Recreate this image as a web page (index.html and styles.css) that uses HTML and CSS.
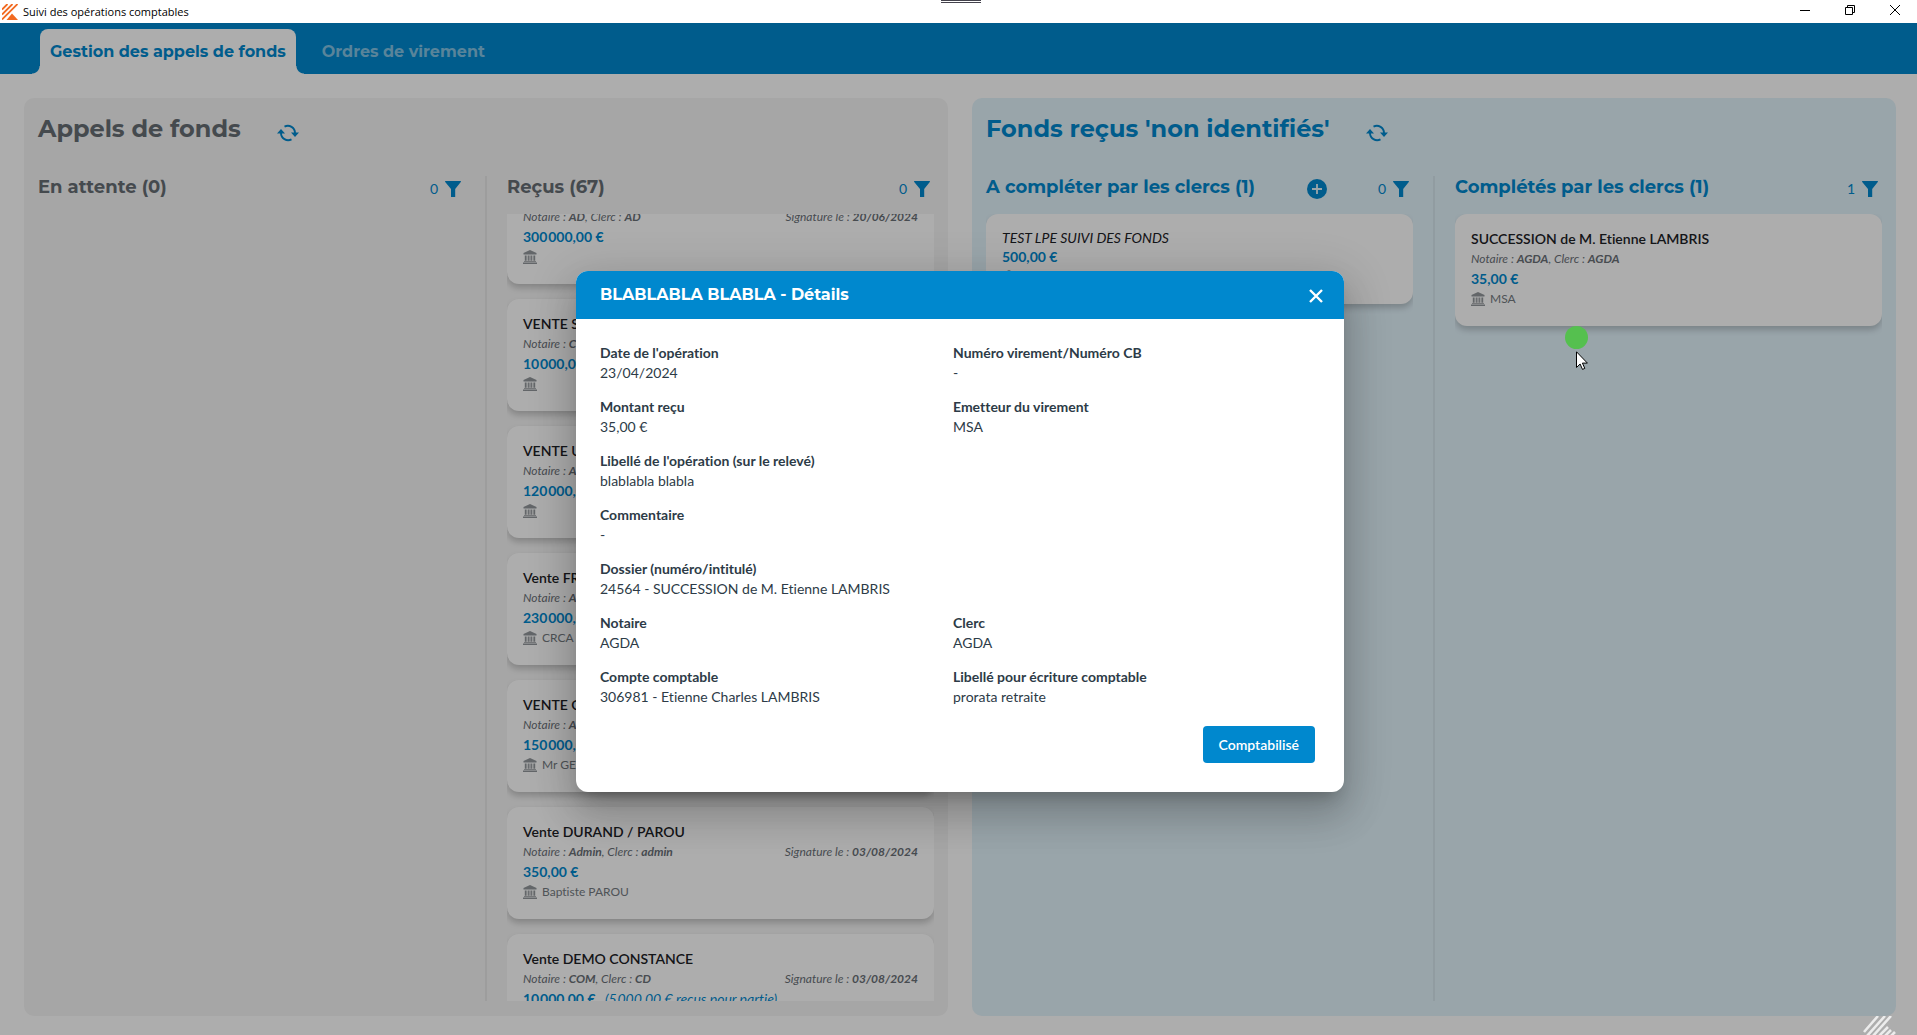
FILE: index.html
```
<!DOCTYPE html>
<html lang="fr">
<head>
<meta charset="utf-8">
<title>Suivi des opérations comptables</title>
<link rel="stylesheet" href="styles.css">
</head>
<body>
<svg class="sprite" aria-hidden="true">
  <symbol id="i-bank" viewBox="0 0 14 14"><path d="M7 0 0.5 3v1.6h13V3zM1.8 5.4h1.8v5.4H1.8zM4.7 5.4h1.2v5.4H4.7zM8.1 5.4h1.2v5.4H8.1zM10.4 5.4h1.8v5.4h-1.8zM6.5 5.4h1v5.4h-1zM1 11h12v.8H1zM0 12.6h14V14H0z"/></symbol>
  <symbol id="i-filter" viewBox="0 0 16 16"><path d="M.6 0h14.8c.6 0 .8.6.4 1L10.200 8v8H6V8L.2 1C-.2.6 0 0 .6 0z"/></symbol>
  <symbol id="i-refresh" viewBox="0 0 22 18"><path d="M7.500 2.600A7.200 7.200 0 0 1 18 9M14.500 15.400A7.200 7.200 0 0 1 4 9" fill="none" stroke="currentColor" stroke-width="1.900"/><path d="M14 8.600h8l-4 4.400zM0 9.400h8L4 5z"/></symbol>
  <symbol id="i-plus" viewBox="0 0 20 20"><circle cx="10" cy="10" r="10"/><path d="M10 5v10M5 10h10" stroke="#e3f3fa" stroke-width="1.800"/></symbol>
</svg>

<header class="titlebar">
  <svg class="app-icon" viewBox="0 0 16 16"><path d="M4.500 16 10 9.500l6 6.500z" fill="#f26a21"/><path d="M0 5.500 5.500 0M0 10.500 10.500 0M0 15.500 15.500 0" stroke="#f26a21" stroke-width="1.800"/></svg>
  <h1 class="app-title">Suivi des opérations comptables</h1>
  <div class="window-controls">
    <button class="win-btn" aria-label="Réduire"><svg viewBox="0 0 10 10"><path d="M0 5.500h10" /></svg></button>
    <button class="win-btn" aria-label="Restaurer"><svg viewBox="0 0 10 10"><path d="M.5 2.500h7v7h-7zM2.500 2.500v-2h7v7h-2"/></svg></button>
    <button class="win-btn" aria-label="Fermer la fenêtre"><svg viewBox="0 0 10 10"><path d="M0 0l10 10M10 0 0 10"/></svg></button>
  </div>
  <div class="drag-handle"></div>
</header>

<div class="app">
  <nav class="tabs">
    <a class="tab active" href="#appels">Gestion des appels de fonds</a>
    <a class="tab" href="#virements">Ordres de virement</a>
  </nav>

  <main class="board">
    <section class="panel">
      <div class="panel-head">
        <h2>Appels de fonds</h2>
        <button class="icon-btn refresh" aria-label="Actualiser"><svg><use href="#i-refresh"/></svg></button>
      </div>
      <div class="columns">
        <section class="column">
          <div class="column-head"><h3>En attente (0)</h3><button class="icon-btn filter" aria-label="Filtrer">0<svg><use href="#i-filter"/></svg></button></div>
          <div class="list"></div>
        </section>
        <section class="column">
          <div class="column-head"><h3>Reçus (67)</h3><button class="icon-btn filter" aria-label="Filtrer">0<svg><use href="#i-filter"/></svg></button></div>
          <div class="list" data-scroll="42">
            <article class="card">
              <h4>VENTE</h4>
              <p class="meta"><span>Notaire : <b>AD</b>, Clerc : <b>AD</b></span><span>Signature le : <b>20/06/2024</b></span></p>
              <p class="amount">300&#8202;000,00 €</p>
              <p class="bank"><svg><use href="#i-bank"/></svg></p>
            </article>
            <article class="card">
              <h4>VENTE S</h4>
              <p class="meta"><span>Notaire : <b>CD</b></span></p>
              <p class="amount">10&#8202;000,00 €</p>
              <p class="bank"><svg><use href="#i-bank"/></svg></p>
            </article>
            <article class="card">
              <h4>VENTE U</h4>
              <p class="meta"><span>Notaire : <b>AD</b></span></p>
              <p class="amount">120&#8202;000,00 €</p>
              <p class="bank"><svg><use href="#i-bank"/></svg></p>
            </article>
            <article class="card">
              <h4>Vente FR</h4>
              <p class="meta"><span>Notaire : <b>AG</b></span></p>
              <p class="amount">230&#8202;000,00 €</p>
              <p class="bank"><svg><use href="#i-bank"/></svg>CRCA</p>
            </article>
            <article class="card">
              <h4>VENTE C</h4>
              <p class="meta"><span>Notaire : <b>AG</b></span></p>
              <p class="amount">150&#8202;000,00 €</p>
              <p class="bank"><svg><use href="#i-bank"/></svg>Mr GE</p>
            </article>
            <article class="card">
              <h4>Vente DURAND / PAROU</h4>
              <p class="meta"><span>Notaire : <b>Admin</b>, Clerc : <b>admin</b></span><span>Signature le : <b>03/08/2024</b></span></p>
              <p class="amount">350,00 €</p>
              <p class="bank"><svg><use href="#i-bank"/></svg>Baptiste PAROU</p>
            </article>
            <article class="card">
              <h4>Vente DEMO CONSTANCE</h4>
              <p class="meta"><span>Notaire : <b>COM</b>, Clerc : <b>CD</b></span><span>Signature le : <b>03/08/2024</b></span></p>
              <p class="amount">10&#8202;000,00 € <i>(5&#8202;000,00 € reçus pour partie)</i></p>
              <p class="bank"><svg><use href="#i-bank"/></svg></p>
            </article>
          </div>
        </section>
      </div>
    </section>

    <section class="panel panel-blue">
      <div class="panel-head">
        <h2>Fonds reçus 'non identifiés'</h2>
        <button class="icon-btn refresh" aria-label="Actualiser"><svg><use href="#i-refresh"/></svg></button>
      </div>
      <div class="columns">
        <section class="column">
          <div class="column-head"><h3>A compléter par les clercs (1)</h3><button class="icon-btn add" aria-label="Ajouter"><svg><use href="#i-plus"/></svg></button><button class="icon-btn filter" aria-label="Filtrer">0<svg><use href="#i-filter"/></svg></button></div>
          <div class="list">
            <article class="card">
              <h4 class="untitled">TEST LPE SUIVI DES FONDS</h4>
              <p class="amount">500,00 €</p>
              <p class="bank"><svg><use href="#i-bank"/></svg></p>
            </article>
          </div>
        </section>
        <section class="column">
          <div class="column-head"><h3>Complétés par les clercs (1)</h3><button class="icon-btn filter" aria-label="Filtrer">1<svg><use href="#i-filter"/></svg></button></div>
          <div class="list">
            <article class="card">
              <h4>SUCCESSION de M. Etienne LAMBRIS</h4>
              <p class="meta"><span>Notaire : <b>AGDA</b>, Clerc : <b>AGDA</b></span></p>
              <p class="amount">35,00 €</p>
              <p class="bank"><svg><use href="#i-bank"/></svg>MSA</p>
            </article>
          </div>
        </section>
      </div>
    </section>
  </main>

  <div class="backdrop">
    <div class="modal" role="dialog" aria-modal="true" aria-labelledby="modal-title">
      <div class="modal-head">
        <h2 id="modal-title">BLABLABLA BLABLA - Détails</h2>
        <button class="close" aria-label="Fermer"><svg viewBox="0 0 14 14"><path d="M1 1l12 12M13 1 1 13"/></svg></button>
      </div>
      <div class="modal-body">
        <dl class="fields">
          <div><dt>Date de l'opération</dt><dd>23/04/2024</dd></div>
          <div><dt>Numéro virement/Numéro CB</dt><dd>-</dd></div>
          <div><dt>Montant reçu</dt><dd>35,00 €</dd></div>
          <div><dt>Emetteur du virement</dt><dd>MSA</dd></div>
          <div class="wide"><dt>Libellé de l'opération (sur le relevé)</dt><dd>blablabla blabla</dd></div>
          <div class="wide"><dt>Commentaire</dt><dd>-</dd></div>
          <div class="wide"><dt>Dossier (numéro/intitulé)</dt><dd>24564 - SUCCESSION de M. Etienne LAMBRIS</dd></div>
          <div><dt>Notaire</dt><dd>AGDA</dd></div>
          <div><dt>Clerc</dt><dd>AGDA</dd></div>
          <div><dt>Compte comptable</dt><dd>306981 - Etienne Charles LAMBRIS</dd></div>
          <div><dt>Libellé pour écriture comptable</dt><dd>prorata retraite</dd></div>
        </dl>
        <button class="primary">Comptabilisé</button>
      </div>
    </div>
  </div>

  <svg class="corner-logo" viewBox="0 0 33 19"><path d="M1 16 15 0M4 20 22 0M10 20 28 0M16 20l9-9M22 20l6-6M28 20l4-4" fill="none" stroke="#ececec" stroke-width="2.600"/></svg>
</div>

<div class="pointer">
  <span class="click-dot"></span>
  <svg class="cursor" viewBox="0 0 12 19"><path d="M.5.8v15.700l3.600-3.500 2.400 5.400 2.300-1-2.400-5.300h5z" fill="#fff" stroke="#000"/></svg>
</div>
<script src="app.js"></script>
</body>
</html>
```
FILE: styles.css
```
* { box-sizing: border-box; }

body {
  margin: 0;
  height: 100vh;
  display: flex;
  flex-direction: column;
  overflow: hidden;
  font-family: Lato, "Liberation Sans", sans-serif;
  font-size: 14px;
  line-height: 20px;
  font-variant-ligatures: none;
  color: #22282e;
  background: #fff;
}

h1, h2, h3, h4, p, dl, dd { margin: 0; }
button { border: 0; padding: 0; background: none; color: inherit; font: inherit; cursor: pointer; }
svg { display: block; fill: currentColor; }
.sprite { position: absolute; width: 0; height: 0; }

/* Window title bar */
.titlebar {
  position: relative;
  flex: none;
  display: flex;
  align-items: center;
  height: 23px;
  padding: 0 17px 0 2px;
  background: #fff;
  color: #000;
}
.app-icon { width: 16px; height: 16px; margin-right: 5px; fill: none; }
.app-title { font: 400 11px/16px "Open Sans", "Noto Sans", sans-serif; }
.window-controls { display: flex; gap: 35px; margin-left: auto; padding-bottom: 3px; }
.win-btn svg { width: 10px; height: 10px; fill: none; stroke: #000; overflow: visible; }
.drag-handle {
  position: absolute;
  top: 0;
  left: 50%;
  width: 40px;
  height: 3px;
  margin-left: -18px;
  border: solid #44424c;
  border-width: 1px 0;
}

/* Tabs */
.app { position: relative; flex: 1; min-height: 0; display: flex; flex-direction: column; }
.tabs { flex: none; display: flex; align-items: flex-end; height: 51px; padding-left: 40px; background: #0088ce; }
.tab {
  position: relative;
  height: 45px;
  padding: 0 10px;
  margin-right: 16px;
  font: 700 16px/45px Montserrat, "Open Sans", sans-serif;
  color: #83c3e4;
  text-decoration: none;
}
.tab.active { color: #0088ce; background: #fff; border-radius: 8px 8px 0 0; }
.tab.active::before, .tab.active::after {
  content: "";
  position: absolute;
  bottom: 0;
  width: 8px;
  height: 8px;
}
.tab.active::before { right: 100%; background: radial-gradient(circle at 0 0, transparent 7px, #fff 8px); }
.tab.active::after { left: 100%; background: radial-gradient(circle at 100% 0, transparent 7px, #fff 8px); }

/* Board */
.board {
  flex: 1;
  min-height: 0;
  display: grid;
  grid-template-columns: 1fr 1fr;
  gap: 24px;
  padding: 24px 21px 19px 24px;
}
.panel { min-height: 0; display: flex; flex-direction: column; padding: 14px 14px 15px; border-radius: 10px; background: #f5f5f5; color: #666d74; }
.panel-blue { background: #e2f3fb; color: #0088ce; }
.panel-head { display: flex; align-items: center; gap: 36px; height: 32px; }
h2 { padding-top: 2px; font: 700 24px/32px Montserrat, "Open Sans", sans-serif; }
h3 { font: 700 18px/24px Montserrat, "Open Sans", sans-serif; margin-right: auto; }
.icon-btn { display: flex; align-items: center; color: #0088ce; }
.refresh { padding-top: 10px; }
.refresh svg { width: 22px; height: 18px; }
.columns { flex: 1; min-height: 0; display: grid; grid-template-columns: 1fr 1fr; gap: 42px; margin-top: 32px; }
.column { position: relative; min-height: 0; display: flex; flex-direction: column; }
.column + .column::before { content: ""; position: absolute; left: -22px; top: 0; bottom: 0; width: 2px; background: rgba(0, 0, 0, .05); }
.column-head { display: flex; align-items: center; height: 38px; padding: 0 4px 12px 0; }
.column-head h3 { padding-bottom: 4px; }
.filter { gap: 7px; }
.filter svg { width: 16px; height: 16px; }
.add { margin-right: 51px; }
.add svg { width: 20px; height: 20px; }

/* Cards */
.list { flex: 1; min-height: 0; overflow: hidden; }
.card { padding: 15px 16px 17px; border-radius: 12px; background: #fff; box-shadow: 0 4px 6px rgba(0, 0, 0, .2); }
.card + .card { margin-top: 15px; }
.card h4 { font-size: 14px; font-weight: 600; line-height: 20px; color: #1c2126; }
.card h4.untitled { font-weight: 400; font-style: italic; line-height: 18px; }
.meta { display: flex; justify-content: space-between; font-size: 12px; font-style: italic; color: #6a7077; }
.meta b { font-weight: 700; }
.amount { font-weight: 700; color: #0088ce; }
.amount i { margin-left: 6px; font-weight: 400; }
.bank { display: flex; align-items: center; gap: 5px; height: 20px; font-size: 12px; color: #757b81; }
.bank svg { width: 14px; height: 14px; color: #92979b; }

/* Modal */
.backdrop {
  position: absolute;
  inset: 0;
  display: flex;
  align-items: center;
  justify-content: center;
  padding: 5px 0 0 3px;
  background: rgba(0, 0, 0, .32);
}
.modal {
  width: 768px;
  max-width: 100%;
  border-radius: 12px;
  overflow: hidden;
  background: #fff;
  box-shadow: 0 11px 15px -7px rgba(0, 0, 0, .2), 0 24px 38px 3px rgba(0, 0, 0, .14), 0 9px 46px 8px rgba(0, 0, 0, .12);
}
.modal-head { display: flex; align-items: center; justify-content: space-between; height: 48px; padding: 0 21px 0 24px; background: #0088ce; color: #fff; }
.modal-head h2 { padding: 0; font-size: 16px; line-height: 24px; }
.close { padding-top: 2px; }
.close svg { width: 14px; height: 14px; fill: none; stroke: #fff; stroke-width: 2.4; }
.modal-body { display: flex; flex-direction: column; padding: 24px 29px 29px 24px; }
.fields { display: grid; grid-template-columns: 1fr 1fr; gap: 14px 0; padding-right: 9px; color: #2d3b47; }
.wide { grid-column: 1 / -1; }
dt { font-weight: 700; }
.primary { align-self: flex-end; height: 37px; margin-top: 19px; padding: 0 16px; border-radius: 4px; background: #0088ce; color: #fff; font-weight: 600; }

.corner-logo { position: absolute; right: 21px; bottom: 0; width: 33px; height: 19px; }

/* Recorded mouse pointer */
.pointer { position: absolute; left: 1565px; top: 326px; display: flex; flex-direction: column; gap: 2px; pointer-events: none; }
.click-dot { width: 23px; height: 23px; border-radius: 50%; background: #55c04f; }
.cursor { width: 12px; height: 19px; margin-left: 11px; }
```
FILE: app.js
```
document.querySelectorAll("[data-scroll]").forEach(function (list) {
  list.scrollTop = Number(list.dataset.scroll);
});
```
